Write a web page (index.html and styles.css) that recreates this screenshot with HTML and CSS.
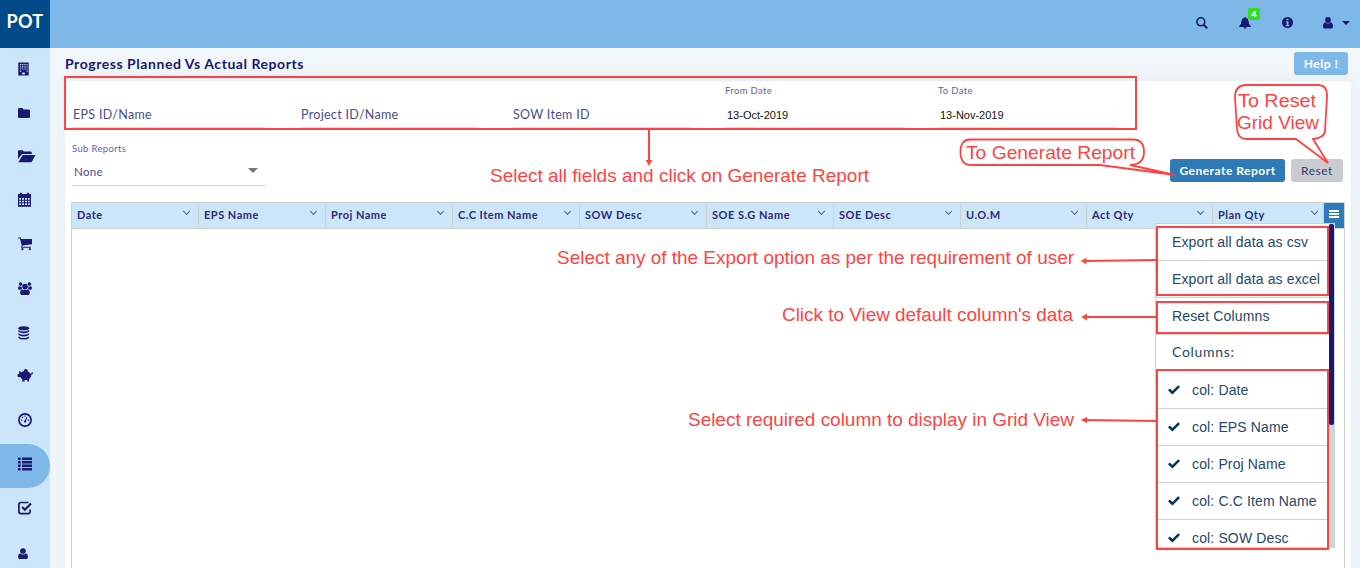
FILE: index.html
```
<!DOCTYPE html>
<html lang="en">
<head>
<meta charset="utf-8">
<title>Progress Planned Vs Actual Reports</title>
<link rel="stylesheet" href="styles.css">
</head>
<body>
<header class="topbar">
  <div class="logo">POT</div>
  <nav class="top-actions">
    <svg class="act search" viewBox="0 0 13 13"><circle cx="5.2" cy="5.2" r="4.300" fill="none" stroke="currentColor" stroke-width="1.700"/><path d="M8.2 8.2 12.300 12.300" stroke="currentColor" stroke-width="2.100"/></svg>
    <span class="act bell"><svg viewBox="0 0 13 13"><path d="M6.5 0q.8 0 .8.9Q10 1.400 10.300 4.500q.3 3.700 2.500 5.500v.7H.2V10Q2.400 8.200 2.700 4.500 3 1.400 5.700.9 5.700 0 6.500 0zM4.800 11.200h3.400Q7.900 12.600 6.500 12.600T4.800 11.200z"/></svg><b class="badge">4</b></span>
    <svg class="act info" viewBox="0 0 12 12"><path fill-rule="evenodd" d="M6 0a6 6 0 1 1 0 12A6 6 0 0 1 6 0zM5 1.800v1.800h2V1.800zM4.200 4.600v1.200H5v2.900h-.8V10h3.700V8.700h-.8V4.600z"/></svg>
    <svg class="act person" viewBox="0 0 10 12"><circle cx="5" cy="3" r="2.900"/><path d="M2.100 5.300Q5 7.800 7.900 5.300 10 6 10 9.500 10 11.500 8.400 11.500H1.600Q0 11.500 0 9.500 0 6 2.100 5.300z"/></svg>
    <i class="caret"></i>
  </nav>
</header>
<div class="shell">
  <aside class="sidebar">
    <a class="item"><svg viewBox="0 0 16 16"><path fill-rule="evenodd" d="M.3 1.500h10.400v13H.3zM2 3v1.200h1.200V3zm2.200 0v1.200h1.200V3zm2.200 0v1.200h1.200V3zm2.200 0v1.200h1V3zM2 5.200v1.200h1.200V5.200zm2.200 0v1.200h1.200V5.200zm2.200 0v1.200h1.200V5.200zm2.200 0v1.200h1V5.200zM2 7.400v1.200h1.200V7.400zm2.200 0v1.200h1.200V7.400zm2.200 0v1.200h1.200V7.400zm2.200 0v1.200h1V7.400zM2 9.600v1.200h1.200V9.600zm6.600 0v1.200h1V9.600zM4.200 11.600v1.900h2.600v-1.900z"/></svg></a>
    <a class="item"><svg viewBox="0 0 16 16"><path d="M0 4.200Q0 3 1.200 3h2.900Q5.300 3 5.500 4.500h5.200Q12 4.500 12 5.800v5.900q0 1.300-1.300 1.300H1.300Q0 13 0 11.700z"/></svg></a>
    <a class="item"><svg viewBox="0 0 18 16"><path d="M0 11V3.200Q0 2.200 1 2.200h3.500q1 0 1 1.300h7q1.300 0 1.300 1.200v1.200H5.300Q4 5.900 3.200 7z"/><path d="M.4 14.300 4.100 8q.5-.9 1.500-.9H17.500L14 13.400q-.5.9-1.600.9z"/></svg></a>
    <a class="item"><svg viewBox="0 0 16 16"><path fill-rule="evenodd" d="M2 2V.8h2V2h5V.8h2V2h2v12.700H0V2zM1.200 6v1.700H3V6zm2.800 0v1.700h2V6zm3 0v1.700h2V6zm3 0v1.700h1.800V6zM1.200 8.700v1.600H3V8.700zm2.800 0v1.600h2V8.700zm3 0v1.600h2V8.700zm3 0v1.600h1.800V8.700zM1.200 11.300V13H3v-1.700zm2.800 0V13h2v-1.700zm3 0V13h2v-1.700zm3 0V13h1.800v-1.700z"/></svg></a>
    <a class="item"><svg viewBox="0 0 16 16"><path d="M0 1.500h2.600l.6 1.500H14v5.300L4.600 9.500l-.3 1.200h8.600v1H3L3.700 9.500 2 2.600H0z"/><circle cx="4.400" cy="13.200" r="1.100"/><circle cx="11.800" cy="13.200" r="1.100"/></svg></a>
    <a class="item"><svg viewBox="0 0 16 16"><circle cx="7" cy="5.600" r="2.800"/><circle cx="2.600" cy="3.100" r="1.800"/><circle cx="11.400" cy="3.100" r="1.800"/><path d="M4 8.200Q7 10 10 8.200q2 .8 1.800 4.400Q11.600 14 10.400 14H3.600Q2.400 14 2.200 12.600 2 9 4 8.200zM1.200 5.200q1.400.9 2.500.2-.2 1.500.4 2.400Q3 8 2.400 8.700H.9Q-.3 8 .1 6.500q.3-1.200 1.100-1.300zm11.600 0q-1.400.9-2.500.2.200 1.500-.4 2.400 1.100.2 1.700.9h1.500q1.200-.7.8-2.200-.3-1.200-1.100-1.300z"/></svg></a>
    <a class="item"><svg viewBox="0 0 16 16"><ellipse cx="5.700" cy="3.300" rx="5.400" ry="2"/><path d="M.3 5Q5.700 8 11.100 5v1.500Q9.500 8.300 5.700 8.300T.3 6.500zm0 3.200q5.400 3 10.800 0v1.500q-1.600 1.800-5.400 1.800T.3 9.700zm0 3.200q5.400 3 10.800 0v1.500q-1.600 1.600-5.400 1.600T.3 12.900z"/></svg></a>
    <a class="item"><svg viewBox="0 0 16 16"><path d="M3.400 4.200Q5.300 3 7.600 3q3.300 0 5 2.700.8.200 1-.8.100-.9.800-.7.900.3.500 1.300-.4 1-1.600 1.200.3 2.900-2.200 4.300v2.500H9.200V12H6.600v1.500H4.200V11Q3 10.200 2.600 9.300L.3 8.900Q-.4 8.700-.4 8V6.700Q-.4 6 .3 6L1.200 5.700 1.100 3.300Q2.700 3.200 3.400 4.200z"/><circle cx="7.800" cy="2.900" r="2"/></svg></a>
    <a class="item"><svg viewBox="0 0 16 16"><circle cx="7" cy="8" r="6.100" fill="none" stroke="currentColor" stroke-width="1.700"/><path d="M6 9.800Q5.800 8.400 7 8.300L8.500 5l.8.400-1.300 3.300q.6 1-.2 1.600-1.200.5-1.800-.5zM3 7.500h1.300v1.200H3zm6.700 0H11v1.200H9.700zM4 4.800h1.200V6H4zm2.400-1.200h1.200v1.200H6.400z"/></svg></a>
    <a class="item active"><svg viewBox="0 0 16 16"><path d="M0 1.500h2.600V4H0zm4 0h10V4H4zM0 5h2.600v2.500H0zm4 0h10v2.500H4zM0 8.500h2.600V11H0zm4 0h10V11H4zM0 12h2.600v2.500H0zm4 0h10v2.500H4z"/></svg></a>
    <a class="item"><svg viewBox="0 0 16 16"><path d="M10.500 2.500H3Q.9 2.500.9 4.600v7q0 2.100 2.100 2.100h7q2.100 0 2.100-2.100V9.500" fill="none" stroke="currentColor" stroke-width="1.700"/><path d="m4.200 7 2.700 2.800 6.100-6.300" fill="none" stroke="currentColor" stroke-width="2.100"/></svg></a>
    <a class="item"><svg viewBox="0 0 16 16"><circle cx="5" cy="6" r="2.800"/><path d="M2.100 8.200Q5 10.700 7.900 8.200 10 8.900 10 12q0 2-1.600 2H1.600Q0 14 0 12q0-3.100 2.100-3.800z"/></svg></a>
  </aside>
  <main class="main">
    <div class="heading"><h1>Progress Planned Vs Actual Reports</h1><button class="btn help">Help !</button></div>
    <section class="card">
      <div class="filters">
        <label class="field"><span class="ph">EPS ID/Name</span></label>
        <label class="field"><span class="ph">Project ID/Name</span></label>
        <label class="field"><span class="ph">SOW Item ID</span></label>
        <label class="field"><small>From Date</small><span class="val">13-Oct-2019</span></label>
        <label class="field"><small>To Date</small><span class="val">13-Nov-2019</span></label>
      </div>
      <div class="subrow">
        <div class="select"><small>Sub Reports</small><div class="choice"><span>None</span><i></i></div></div>
        <div class="buttons"><button class="btn primary">Generate Report</button><button class="btn reset">Reset</button></div>
      </div>
      <div class="grid">
        <div class="grid-head">
          <div class="th"><span>Date</span><i></i></div>
          <div class="th"><span>EPS Name</span><i></i></div>
          <div class="th"><span>Proj Name</span><i></i></div>
          <div class="th"><span>C.C Item Name</span><i></i></div>
          <div class="th"><span>SOW Desc</span><i></i></div>
          <div class="th"><span>SOE S.G Name</span><i></i></div>
          <div class="th"><span>SOE Desc</span><i></i></div>
          <div class="th"><span>U.O.M</span><i></i></div>
          <div class="th"><span>Act Qty</span><i></i></div>
          <div class="th last"><span>Plan Qty</span><i></i></div>
          <div class="menu-btn"><b></b><b></b><b></b></div>
        </div>
        <div class="menu">
          <ul>
            <li>Export all data as csv</li>
            <li>Export all data as excel</li>
            <li>Reset Columns</li>
            <li class="caption">Columns:</li>
            <li><svg viewBox="0 0 12 10"><path d="M0 5.300 1.800 3.500 4.400 6 10.200.3 12 2.100 4.400 9.500z"/></svg>col: Date</li>
            <li><svg viewBox="0 0 12 10"><path d="M0 5.300 1.800 3.500 4.400 6 10.200.3 12 2.100 4.400 9.500z"/></svg>col: EPS Name</li>
            <li><svg viewBox="0 0 12 10"><path d="M0 5.300 1.800 3.500 4.400 6 10.200.3 12 2.100 4.400 9.500z"/></svg>col: Proj Name</li>
            <li><svg viewBox="0 0 12 10"><path d="M0 5.300 1.800 3.500 4.400 6 10.200.3 12 2.100 4.400 9.500z"/></svg>col: C.C Item Name</li>
            <li><svg viewBox="0 0 12 10"><path d="M0 5.300 1.800 3.500 4.400 6 10.200.3 12 2.100 4.400 9.500z"/></svg>col: SOW Desc</li>
          </ul>
          <div class="scroll"><div class="thumb"></div></div>
        </div>
      </div>
    </section>
  </main>
</div>
<svg class="notes" viewBox="0 0 1360 568">
  <g class="line">
    <rect x="65" y="77" width="1071" height="52"/>
    <rect x="1157" y="227" width="171" height="68"/>
    <rect x="1157" y="302" width="171" height="31"/>
    <rect x="1157" y="370" width="171" height="179"/>
    <path d="M649 130v32M1156 260l-70 1M1156 317h-69M1156 421l-69-1"/>
    <path class="bubble" d="M971 139.500h162q11 0 11 12.500t-14 13l45 10-75-10H971q-10.500 0-10.500-13T971 139.500z"/>
    <path class="bubble" d="M1245 85h74q9 1 8 12l-2 34q-1 7-12 8l15 24-32-24h-50q-8 0-9-10l-2-32q0-11 10-12z"/>
  </g>
  <path class="tip" d="m649 166-3.300-6h6.600zM1080.500 261l6-3.300v6.600zM1081 317l6-3.300v6.600zM1081 420l6-3.300v6.600z"/>
  <g class="say">
    <text x="490" y="182" textLength="379" lengthAdjust="spacingAndGlyphs">Select all fields and click on Generate Report</text>
    <text x="557" y="264" textLength="517" lengthAdjust="spacingAndGlyphs">Select any of the Export option as per the requirement of user</text>
    <text x="782" y="321" textLength="291" lengthAdjust="spacingAndGlyphs">Click to View default column's data</text>
    <text x="688" y="426" textLength="386" lengthAdjust="spacingAndGlyphs">Select required column to display in Grid View</text>
    <text x="966" y="159" textLength="169" lengthAdjust="spacingAndGlyphs">To Generate Report</text>
    <text x="1238" y="107" textLength="78" lengthAdjust="spacingAndGlyphs">To Reset</text>
    <text x="1237" y="129" textLength="82" lengthAdjust="spacingAndGlyphs">Grid View</text>
  </g>
</svg>
</body>
</html>
```
FILE: styles.css
```
* { box-sizing: border-box; }
body { margin: 0; height: 568px; overflow: hidden; position: relative; font-family: Lato, "Liberation Sans", sans-serif; color: #191970; background: #f0f6f9; }
svg { fill: currentColor; display: block; overflow: visible; }
.topbar { height: 48px; background: #7db8e8; display: flex; justify-content: space-between; }
.logo { width: 50px; background: #004b87; color: #fff; font-weight: 700; font-size: 18px; line-height: 43px; text-align: center; letter-spacing: .3px; }
.top-actions { display: flex; align-items: center; padding: 0 10px 3px 0; }
.search { width: 12px; height: 12px; margin-right: 31px; }
.bell { width: 12px; height: 12px; margin-right: 31px; position: relative; }
.badge { position: absolute; left: 9px; top: -9px; width: 12px; height: 12px; background: #3d2; border-radius: 2px; color: #fff; font: 700 9.500px/11px "Liberation Sans", sans-serif; text-align: center; }
.info { width: 11px; height: 11px; margin-right: 30px; }
.person { width: 10px; height: 12px; margin-right: 9px; }
.caret { border: 4px solid transparent; border-top-color: #191970; border-bottom: 0; }
.shell { display: flex; height: 520px; }
.sidebar { width: 50px; background: #cbe5f9; flex: none; }
.item { height: 44px; display: flex; align-items: center; padding: 0 0 2px 18px; }
.item svg { width: 16px; height: 16px; }
.item:nth-child(3) svg { width: 18px; }
.item:nth-child(n+3):nth-child(-n+5), .item:nth-child(n+8):nth-child(-n+11) { padding-bottom: 4px; }
.active { background: #7db8e8; border-radius: 0 22px 22px 0; }
.main { flex: 1; min-width: 0; padding: 0 9px 0 15px; display: flex; flex-direction: column; }
.heading { height: 33px; display: flex; justify-content: space-between; padding: 4px 3px 6px 0; }
h1 { margin: 0; font-size: 14px; line-height: 24px; letter-spacing: .55px; }
.btn { border: 0; border-radius: 3px; height: 23px; padding: 0; font: 700 12px/23px Lato, sans-serif; letter-spacing: .5px; color: #fff; }
.help { width: 54px; background: #7db8e8; }
.card { flex: 1; background: #fff; border-radius: 4px 4px 0 0; box-shadow: 0 0 15px rgba(60, 90, 80, .07); padding: 0 6px 0 7px; }
.filters { display: grid; grid-template-columns: 194px 178px 179px 179px 178px; column-gap: 34px; height: 47px; }
.field { display: flex; flex-direction: column; border-bottom: 1px solid #ddd; position: relative; justify-content: flex-end; color: #4c4c8c; }
small { font-size: 9.500px; line-height: 12px; letter-spacing: .35px; color: #6262a0; }
.ph { font-size: 12.500px; line-height: 17px; letter-spacing: .3px; padding: 0 0 4px 1px; }
.val { font: 11px/17px "Liberation Sans", sans-serif; color: #111; padding: 0 0 3px 2px; }
.field small { margin-bottom: 10px; }
.subrow { display: flex; justify-content: space-between; height: 74px; padding-top: 15px; }
.select { width: 194px; }
.select small { display: block; }
.choice { display: flex; justify-content: space-between; height: 31px; border-bottom: 1px solid #d8d8d8; padding: 9px 8px 0 2px; font-size: 11.500px; line-height: 16px; letter-spacing: .3px; color: #4c4c8c; }
.choice i { margin-top: 4px; height: 0; border: 5px solid transparent; border-top: 5px solid #777; }
.buttons { display: flex; gap: 6px; padding: 16px 2px 0 0; }
.primary { width: 115px; background: #2e7ab6; }
.reset { width: 52px; background: #c8ccd1; color: #38387a; font-weight: 400; }
.grid { margin-left: -1px; border: 1px solid #d0d0d0; height: 370px; position: relative; }
.grid-head { display: grid; grid-template-columns: repeat(7, 127px) 126px 126px 111px 20px; grid-template-rows: 25px; height: 26px; border-bottom: 1px solid #d0d0d0; background: #cbe5f9; }
.th { display: flex; justify-content: space-between; padding: 0 9px 0 5px; border-right: 1px solid #d0d0d0; font-size: 11px; font-weight: 700; line-height: 23px; letter-spacing: .5px; white-space: nowrap; color: #2b2b78; }
.th.last { padding-right: 6px; }
.th i { width: 5px; height: 5px; margin-top: 6px; border: solid #5a5a98; border-width: 0 1px 1px 0; transform: rotate(45deg); flex: none; }
.menu-btn { background: #2e7ab6; padding: 6px 4px; display: flex; flex-direction: column; border: 1px solid #2a7bd0; }
.menu-btn b { height: 2px; width: 10px; background: #fff; flex: none; }
.menu-btn b + b { margin-top: 1px; }
.menu { position: absolute; left: 1083px; top: 20px; width: 180px; height: 325px; display: flex; border: solid #d0d0d0; border-width: 1px 0 1px 1px; background: #fff; overflow: hidden; }
.menu ul { margin: 0; padding: 0; list-style: none; width: 173px; flex: none; }
.menu li { height: 37px; border-bottom: 1px solid #d0d0d0; padding-left: 16px; display: flex; align-items: center; font: 14px "Liberation Sans", sans-serif; letter-spacing: .14px; color: #24486a; white-space: nowrap; }
.menu li svg { width: 12px; height: 10px; margin: 0 12px 0 -4px; color: #003358; }
.menu .caption { font-family: Lato, sans-serif; letter-spacing: .7px; border-bottom: 0; padding-bottom: 5px; }
.scroll { flex: 1; background: #d2d2d2; }
.thumb { height: 201px; background: #191970; border-radius: 2px; margin: 0 1px 0 0; }
.notes { position: absolute; left: 0; top: 0; width: 1360px; height: 568px; }
.line { fill: none; stroke: #ff4343; stroke-width: 2; }
.bubble { stroke-width: 1.800; }
.tip, .say { fill: #ff4343; }
.say { font: 19px "Liberation Sans", sans-serif; }
```
